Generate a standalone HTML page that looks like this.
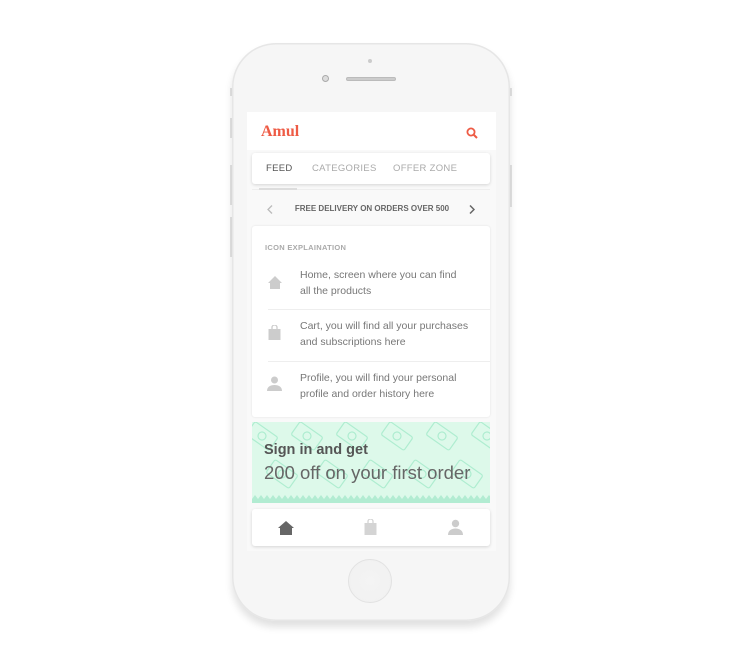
<!DOCTYPE html>
<html><head><style>
*{margin:0;padding:0;box-sizing:border-box}
body{width:737px;height:672px;background:#fff;position:relative;overflow:hidden;font-family:"Liberation Sans",Arial,sans-serif}
.a{position:absolute}
.phone{left:232px;top:43px;width:278px;height:578px;border-radius:44px;background:#f6f6f6;box-shadow:0 0 0 1.5px #e6e6e6 inset,0 6px 8px rgba(0,0,0,0.12)}
.screen{left:247px;top:112px;width:249px;height:439px;background:#f9f9f9;overflow:hidden}
.card{background:#fff;border-radius:3px;box-shadow:0 1px 3px rgba(0,0,0,0.15)}
.t{color:#777;font-size:10.5px;line-height:16px}
</style></head><body>
<div class="a" style="left:230px;top:88px;width:3px;height:8px;background:#e4e4e4"></div>
<div class="a" style="left:230px;top:118px;width:3px;height:20px;background:#e4e4e4"></div>
<div class="a" style="left:230px;top:165px;width:3px;height:40px;background:#e4e4e4"></div>
<div class="a" style="left:230px;top:217px;width:3px;height:40px;background:#e4e4e4"></div>
<div class="a" style="left:509px;top:88px;width:3px;height:8px;background:#e4e4e4"></div>
<div class="a" style="left:509px;top:165px;width:3px;height:42px;background:#e4e4e4"></div>
<div class="a phone"></div>
<div class="a" style="left:368px;top:59px;width:4px;height:4px;border-radius:50%;background:#ccc"></div>
<div class="a" style="left:322px;top:75px;width:7px;height:7px;border-radius:50%;border:1.5px solid #aaa;background:#ddd"></div>
<div class="a" style="left:346px;top:77px;width:50px;height:4px;border-radius:2px;background:#ccc;border:1px solid #bbb"></div>
<div class="a" style="left:348px;top:559px;width:44px;height:44px;border-radius:50%;border:1.5px solid #e2e2e2;background:radial-gradient(#f4f4f4,#f0f0f0)"></div>
<div class="a screen">
 <div class="a" style="left:0;top:0;width:249px;height:38px;background:#fff"></div>
 <div class="a" style="left:14px;top:11px;font-family:'Liberation Serif',serif;font-weight:bold;font-size:16px;color:#ee5b45">Amul</div>
 <svg class="a" style="left:219px;top:15px" width="12" height="12" viewBox="0 0 12 12"><circle cx="5" cy="5" r="3.6" stroke="#ee5b45" stroke-width="1.8" fill="none"/><path d="M7.5 7.5L11 11" stroke="#ee5b45" stroke-width="2"/></svg>
 <div class="a card" style="left:5px;top:41px;width:238px;height:31px"></div>
 <div class="a" style="left:19px;top:51px;font-size:9.5px;color:#555;letter-spacing:.3px">FEED</div>
 <div class="a" style="left:65px;top:51px;font-size:9.5px;color:#aaa;letter-spacing:.3px">CATEGORIES</div>
 <div class="a" style="left:146px;top:51px;font-size:9.5px;color:#aaa;letter-spacing:.3px">OFFER ZONE</div>
 <div class="a" style="left:5px;top:77px;width:238px;height:1px;background:#eee"></div>
 <div class="a" style="left:12px;top:76px;width:38px;height:2px;background:#ddd"></div>
 <svg class="a" style="left:20px;top:93px" width="6" height="9" viewBox="0 0 6 9"><path d="M5 0.5L1 4.5L5 8.5" stroke="#bbb" stroke-width="1.3" fill="none"/></svg>
 <svg class="a" style="left:222px;top:93px" width="6" height="9" viewBox="0 0 6 9"><path d="M1 0.5L5 4.5L1 8.5" stroke="#666" stroke-width="1.5" fill="none"/></svg>
 <div class="a" style="left:0;width:249px;top:92px;text-align:center;font-size:8px;font-weight:bold;color:#666;padding-left:1px">FREE DELIVERY ON ORDERS OVER 500</div>
 <div class="a card" style="left:5px;top:114px;width:238px;height:191px;box-shadow:0 0 2px rgba(0,0,0,0.1)"></div>
 <div class="a" style="left:18px;top:131px;font-size:7.5px;font-weight:bold;color:#aaa;letter-spacing:.3px">ICON EXPLAINATION</div>
 <svg class="a" style="left:21px;top:164px" width="14" height="13" viewBox="0 0 14 13"><path d="M7 0L0 7h2v6h10V7h2z" fill="#ccc"/></svg>
 <div class="a t" style="left:53px;top:155px">Home, screen where you can find<br>all the products</div>
 <div class="a" style="left:21px;top:197px;width:222px;height:1px;background:#eee"></div>
 <svg class="a" style="left:21px;top:213px" width="13" height="15" viewBox="0 0 13 15"><path d="M4 4V2.5a2.5 2.5 0 0 1 5 0V4" stroke="#ccc" stroke-width="1.3" fill="none"/><rect x="0.5" y="4" width="12" height="11" fill="#ccc"/></svg>
 <div class="a t" style="left:53px;top:206px">Cart, you will find all your purchases<br>and subscriptions here</div>
 <div class="a" style="left:21px;top:249px;width:222px;height:1px;background:#eee"></div>
 <svg class="a" style="left:20px;top:264px" width="15" height="15" viewBox="0 0 15 15"><circle cx="7.5" cy="4" r="3.5" fill="#ccc"/><path d="M0 15c0-4 3-6 7.5-6s7.5 2 7.5 6z" fill="#ccc"/></svg>
 <div class="a t" style="left:53px;top:258px">Profile, you will find your personal<br>profile and order history here</div>
 <div class="a" style="left:5px;top:310px;width:238px;height:81px;background:#ddf9ea;overflow:hidden">
  <svg width="238" height="81" style="position:absolute;left:0;top:0">
   <g stroke="#aeedd0" stroke-width="1.2" fill="none">
    <g transform="translate(10,14) rotate(35)"><rect x="-14" y="-8" width="28" height="16" rx="2"/><circle r="4"/></g>
    <g transform="translate(55,14) rotate(35)"><rect x="-14" y="-8" width="28" height="16" rx="2"/><circle r="4"/></g>
    <g transform="translate(100,14) rotate(35)"><rect x="-14" y="-8" width="28" height="16" rx="2"/><circle r="4"/></g>
    <g transform="translate(145,14) rotate(35)"><rect x="-14" y="-8" width="28" height="16" rx="2"/><circle r="4"/></g>
    <g transform="translate(190,14) rotate(35)"><rect x="-14" y="-8" width="28" height="16" rx="2"/><circle r="4"/></g>
    <g transform="translate(235,14) rotate(35)"><rect x="-14" y="-8" width="28" height="16" rx="2"/><circle r="4"/></g>
    <g transform="translate(30,52) rotate(35)"><rect x="-14" y="-8" width="28" height="16" rx="2"/><circle r="4"/></g>
    <g transform="translate(80,52) rotate(35)"><rect x="-14" y="-8" width="28" height="16" rx="2"/><circle r="4"/></g>
    <g transform="translate(125,52) rotate(35)"><rect x="-14" y="-8" width="28" height="16" rx="2"/><circle r="4"/></g>
    <g transform="translate(170,52) rotate(35)"><rect x="-14" y="-8" width="28" height="16" rx="2"/><circle r="4"/></g>
    <g transform="translate(215,52) rotate(35)"><rect x="-14" y="-8" width="28" height="16" rx="2"/><circle r="4"/></g>
   </g>
   <path d="M0 81 L0 77 l3 -4 l3 4 l3 -4 l3 4 l3 -4 l3 4 l3 -4 l3 4 l3 -4 l3 4 l3 -4 l3 4 l3 -4 l3 4 l3 -4 l3 4 l3 -4 l3 4 l3 -4 l3 4 l3 -4 l3 4 l3 -4 l3 4 l3 -4 l3 4 l3 -4 l3 4 l3 -4 l3 4 l3 -4 l3 4 l3 -4 l3 4 l3 -4 l3 4 l3 -4 l3 4 l3 -4 l3 4 l3 -4 l3 4 l3 -4 l3 4 l3 -4 l3 4 l3 -4 l3 4 l3 -4 l3 4 l3 -4 l3 4 l3 -4 l3 4 l3 -4 l3 4 l3 -4 l3 4 l3 -4 l3 4 l3 -4 l3 4 l3 -4 l3 4 l3 -4 l3 4 l3 -4 l3 4 l3 -4 l3 4 l3 -4 l3 4 l3 -4 l3 4 l3 -4 l3 4 l3 -4 l3 4 l3 -4 l3 4 l3 -4 l3 4 l3 -4 l3 4 l3 -4 l3 4 l3 -4 l3 4 l3 -4 l3 4 L240 81z" fill="#b2ecd2"/>
  </svg>
  <div class="a" style="left:12px;top:20px;font-size:14.5px;font-weight:bold;color:#555">Sign in and get</div>
  <div class="a" style="left:12px;top:40px;font-size:18.5px;color:#666">200 off on your first order</div>
 </div>
 <div class="a card" style="left:5px;top:397px;width:238px;height:37px"></div>
 <svg class="a" style="left:31px;top:409px" width="16" height="14" viewBox="0 0 16 14"><path d="M8 0L0 7h2v7h12V7h2z" fill="#666"/></svg>
 <svg class="a" style="left:117px;top:407px" width="13" height="16" viewBox="0 0 13 16"><path d="M4 4V2.5a2.5 2.5 0 0 1 5 0V4" stroke="#d4d4d4" stroke-width="1.3" fill="none"/><rect x="0.5" y="4" width="12" height="12" fill="#d4d4d4"/></svg>
 <svg class="a" style="left:201px;top:407px" width="15" height="16" viewBox="0 0 15 16"><circle cx="7.5" cy="4.5" r="3.7" fill="#ccc"/><path d="M0 16c0-4 3-6.5 7.5-6.5s7.5 2.5 7.5 6.5z" fill="#ccc"/></svg>
</div>
</body></html>
